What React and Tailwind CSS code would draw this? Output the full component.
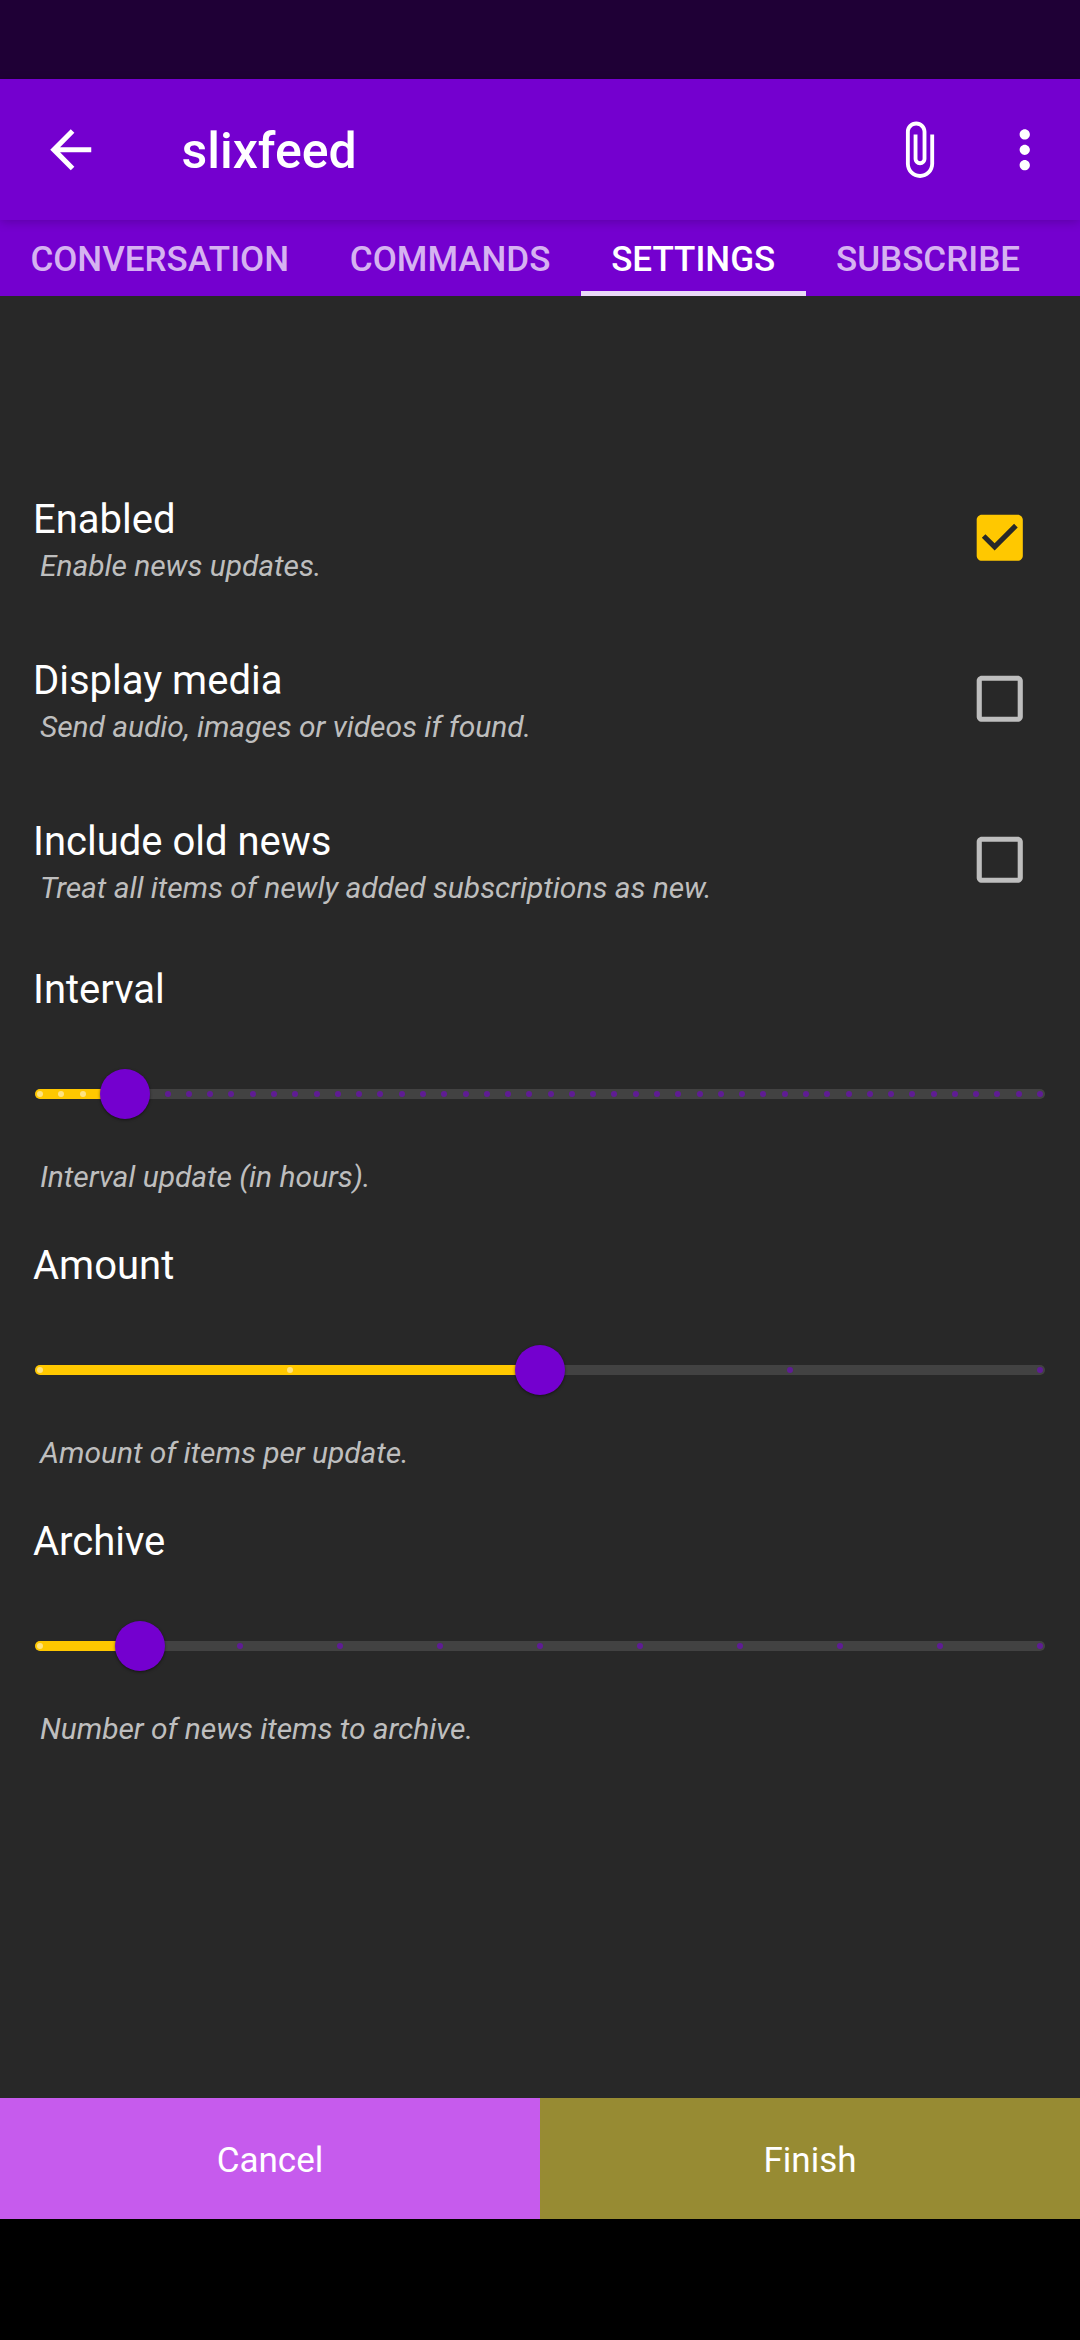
const TOGGLES = [
  { title: "Enabled", hint: "Enable news updates.", checked: true },
  { title: "Display media", hint: "Send audio, images or videos if found.", checked: false },
  { title: "Include old news", hint: "Treat all items of newly added subscriptions as new.", checked: false },
];

const SLIDERS = [
  { title: "Interval", hint: "Interval update (in hours).", steps: 47, value: 4 },
  { title: "Amount", hint: "Amount of items per update.", steps: 4, value: 2 },
  { title: "Archive", hint: "Number of news items to archive.", steps: 10, value: 1 },
];

const TABS = ["Conversation", "Commands", "Settings", "Subscribe"];

function Icon({ d, className }) {
  return (
    <svg viewBox="0 0 24 24" className={`size-[61.5px] shrink-0 ${className}`} fill="currentColor" aria-hidden="true">
      <path d={d} />
    </svg>
  );
}

const ARROW_BACK = "M20 11H7.83l5.59-5.59L12 4l-8 8 8 8 1.41-1.41L7.83 13H20v-2z";
const ATTACH =
  "M16.5 6v11.5c0 2.21-1.79 4-4 4s-4-1.79-4-4V5c0-1.38 1.12-2.5 2.5-2.5s2.5 1.12 2.5 2.5v10.5c0 .55-.45 1-1 1s-1-.45-1-1V6H10v9.5c0 1.38 1.12 2.5 2.5 2.5s2.5-1.12 2.5-2.5V5c0-2.21-1.79-4-4-4S7 2.79 7 5v12.5c0 3.04 2.46 5.5 5.5 5.5s5.5-2.46 5.5-5.5V6h-1.5z";
const MORE =
  "M12 8c1.1 0 2-.9 2-2s-.9-2-2-2-2 .9-2 2 .9 2 2 2zm0 2c-1.1 0-2 .9-2 2s.9 2 2 2 2-.9 2-2-.9-2-2-2zm0 6c-1.1 0-2 .9-2 2s.9 2 2 2 2-.9 2-2-.9-2-2-2z";
const BOX_CHECKED =
  "M19 3H5c-1.11 0-2 .9-2 2v14c0 1.1.89 2 2 2h14c1.11 0 2-.9 2-2V5c0-1.1-.89-2-2-2zm-9 14l-5-5 1.41-1.41L10 14.17l7.59-7.59L19 8l-9 9z";
const BOX_EMPTY =
  "M19 5v14H5V5h14m0-2H5c-1.1 0-2 .9-2 2v14c0 1.1.9 2 2 2h14c1.1 0 2-.9 2-2V5c0-1.1-.9-2-2-2z";

function Title({ children }) {
  return <div className="pt-px text-[40px] leading-[48px] text-white">{children}</div>;
}

function Hint({ children }) {
  return <div className="pl-[7px] text-[30px] italic leading-9 tracking-[-0.06px] text-[#bebebe]">{children}</div>;
}

function ToggleRow({ title, hint, checked }) {
  return (
    <label className="flex h-[161px] items-center justify-between pl-[33px] pr-[50px]">
      <div className="flex flex-col gap-1 pt-1">
        <Title>{title}</Title>
        <Hint>{hint}</Hint>
      </div>
      <Icon d={checked ? BOX_CHECKED : BOX_EMPTY} className={checked ? "text-[#ffc800]" : "text-[#bebebe]"} />
    </label>
  );
}

function SliderRow({ title, hint, steps, value }) {
  const ticks = Array.from({ length: steps + 1 }, (_, i) => i);
  const position = `${(value / steps) * 100}%`;
  return (
    <section className="flex h-[276px] flex-col px-[33px]">
      <Title>{title}</Title>
      <div className="mx-[2px] mt-[75px] flex h-[10px] rounded-full bg-[#424242]">
        <div className="relative mx-[5px] h-full grow">
          <div className="absolute inset-y-0 -left-[5px] rounded-l-full bg-[#ffc800]" style={{ width: `calc(${position} + 5px)` }} />
          {ticks.map((i) => (
            <span
              key={i}
              className={`absolute top-[2px] size-[6px] -translate-x-1/2 rounded-full ${i <= value ? "bg-[#ffe380]" : "bg-[#5f1c94]"}`}
              style={{ left: `${(i / steps) * 100}%` }}
            />
          ))}
          <span
            className="absolute -top-[20px] size-[50px] -translate-x-1/2 rounded-full bg-[#7400cf] shadow-[0_1px_3px_rgba(0,0,0,0.5)]"
            style={{ left: position }}
          />
        </div>
      </div>
      <div className="mt-[60px]">
        <Hint>{hint}</Hint>
      </div>
    </section>
  );
}

export default function App() {
  return (
    <div className="flex h-[2340px] w-[1080px] flex-col overflow-hidden bg-black font-[Roboto,sans-serif]">
      <div className="h-[79px] shrink-0 bg-[#1f0036]" />
      <header className="z-10 flex h-[141px] shrink-0 items-center bg-[#7400cf] pl-10 pr-[25px] text-white shadow-[0_2px_10px_rgba(0,0,0,0.2)]">
        <Icon d={ARROW_BACK} className="" />
        <h1 className="ml-20 mt-[3px] grow text-[50px] font-medium leading-[60px]">slixfeed</h1>
        <Icon d={ATTACH} className="mr-[44px]" />
        <Icon d={MORE} className="" />
      </header>
      <nav className="flex h-[76px] shrink-0 bg-[#7400cf] text-[35px] font-medium uppercase leading-[42px] shadow-[0_1px_4px_rgba(0,0,0,0.3)]">
        {TABS.map((tab) => (
          <div
            key={tab}
            className={`h-full px-[30.4px] pt-[19px] ${tab === "Settings" ? "border-b-[5px] border-[#eadaf8] text-white" : "text-[#d6b2f1]"}`}
          >
            {tab}
          </div>
        ))}
      </nav>
      <main className="flex grow flex-col bg-[#282828] pt-[161px]">
        {TOGGLES.map((row) => (
          <ToggleRow key={row.title} {...row} />
        ))}
        <div className="pt-[25px]">
          {SLIDERS.map((row) => (
            <SliderRow key={row.title} {...row} />
          ))}
        </div>
      </main>
      <footer className="mb-[121px] grid h-[121px] shrink-0 grid-cols-2 text-[35px] leading-[42px] text-white">
        <button className="bg-[#c65bed] pt-1">Cancel</button>
        <button className="bg-[#978b33] pt-1">Finish</button>
      </footer>
    </div>
  );
}
